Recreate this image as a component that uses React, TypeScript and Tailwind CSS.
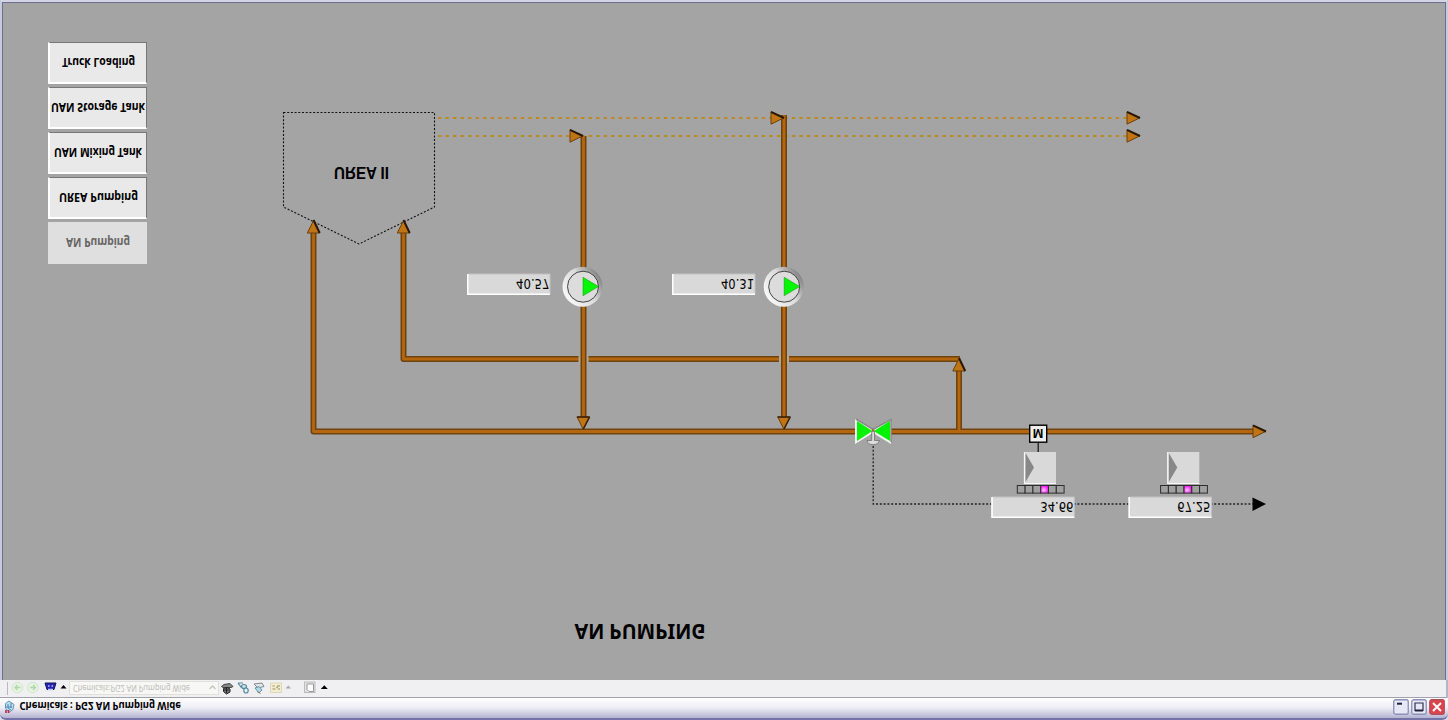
import React from 'react';

const VERDANA = '"Noto Sans", sans-serif';
const ARIAL = '"Liberation Sans", sans-serif';
const TAHOMA = '"DejaVu Sans Condensed", "DejaVu Sans", sans-serif';

const LINKS = [
  { label: 'Truck Loading', width: 73 },
  { label: 'UAN Storage Tank', width: 94 },
  { label: 'UAN Mixing Tank', width: 88 },
  { label: 'UREA Pumping', width: 79 },
  { label: 'AN Pumping', width: 64, current: true },
];

type LabelProps = {
  x: number; y: number; w: number; size: number; children: string;
  font?: string; bold?: boolean; fill?: string;
};

/* Text mirrored about its baseline, fitted to the width w. */
function Label({ x, y, w, size, children, font = VERDANA, bold, fill = '#000' }: LabelProps) {
  return (
    <text transform={`translate(${x} ${y}) scale(1 -1)`} textLength={w} lengthAdjust="spacingAndGlyphs"
      fontSize={size} fontFamily={font} fontWeight={bold ? 700 : 400} fill={fill}>{children}</text>
  );
}

function Pipe({ d }: { d: string }) {
  return (
    <g fill="none" strokeLinejoin="round">
      <path d={d} stroke="#6f430f" strokeWidth="6" />
      <path d={d} stroke="#b4670e" strokeWidth="2.8" />
    </g>
  );
}

function Head({ x, y, angle = 0 }: { x: number; y: number; angle?: number }) {
  const down = angle === 90;
  return (
    <g transform={`translate(${x} ${y}) rotate(${angle})`}>
      <path d="M-13-6.2-.5 0-13 6.2Z" fill="#c07414" stroke="#6b410f" strokeWidth="1" />
      {down
        ? <path d="M-13-6.5V6.5M-13-6.2-1 0" fill="none" stroke="#3a2206" strokeWidth="1.6" />
        : <path d={angle === -90 ? 'M-13 6.2 0 0' : 'M-13-6.2 0 0'} transform={angle === -90 ? 'rotate(0)' : undefined} stroke="#2b1804" strokeWidth="2" />}
    </g>
  );
}

function Pump({ cx }: { cx: number }) {
  return (
    <g>
      <circle cx={cx} cy="286.7" r="20" fill="url(#rim)" />
      <circle cx={cx + 0.5} cy="286.7" r="15.5" fill="#dcdcdc" stroke="#333" strokeWidth="0.9" />
      <path d={`M${cx + 0.5} 277.3 ${cx + 16} 286.5 ${cx + 0.5} 295.7Z`} fill="#04f804" stroke="#178a17" strokeWidth="0.5" />
    </g>
  );
}

function Readout({ x, y, tx, tw, value }: { x: number; y: number; tx: number; tw: number; value: string }) {
  return (
    <g>
      <rect x={x} y={y} width="83" height="21" fill="#d9d9d9" />
      <path d={`M${x + 1} ${y}H${x + 83}V${y + 20}`} fill="none" stroke="#c2c2c2" strokeWidth="1" />
      <path d={`M${x + 0.75} ${y}V${y + 20.25}H${x + 83}`} fill="none" stroke="#fff" strokeWidth="1.5" />
      <Label x={tx} y={y + 5} w={tw} size={13.8} font={TAHOMA}>{value}</Label>
    </g>
  );
}

function Controller({ x }: { x: number }) {
  return (
    <g>
      <rect x={x} y="452" width="32" height="32" fill="#d9d9d9" />
      <path d={`M${x + 0.5} 452V483.5H${x + 32}`} fill="none" stroke="#f8f8f8" strokeWidth="1.2" />
      <path d={`M${x + 1.5} 453 ${x + 10} 467.5 ${x + 1.5} 482Z`} fill="#888" />
      {[0, 1, 2, 3, 4, 5].map((i) => (
        <rect key={i} x={x - 6.7 + i * 7.8} y="485.5" width="7.8" height="7.6"
          fill={i === 3 ? 'url(#lamp)' : '#a0a0a0'} stroke="#2d2d2d" strokeWidth="1" />
      ))}
    </g>
  );
}

function Diagram() {
  return (
    <svg width="1448" height="720" viewBox="0 0 1448 720" className="block">
      <defs>
        <linearGradient id="rim" x1="0.1" y1="0.75" x2="0.9" y2="0.2">
          <stop offset="0" stopColor="#f6f6f6" />
          <stop offset="0.55" stopColor="#dadada" />
          <stop offset="1" stopColor="#858585" />
        </linearGradient>
        <radialGradient id="lamp" cx="0.4" cy="0.6" r="0.6">
          <stop offset="0" stopColor="#ffc4ff" />
          <stop offset="1" stopColor="#f010f0" />
        </radialGradient>
      </defs>

      <path d="M283.5 112.5H434.5V207L359 244 283.5 207Z" fill="none" stroke="#111" strokeWidth="1.1" strokeDasharray="2 1.7" />
      <Label x={334} y={167} w={55} size={16.2} font={ARIAL} bold>UREA II</Label>

      <path d="M438 118H1127M438 136H1127" stroke="#bd8a22" strokeWidth="1.9" strokeDasharray="3.3 4.23" />

      <Pipe d="M403.5 228V359H960" />
      <path d="M583.5 354.500V363.500M784 354.500V363.500" stroke="#aaa99a" strokeWidth="10" />
      <Pipe d="M313.5 228V431.5H1254" />
      <Pipe d="M583.5 136V418" />
      <Pipe d="M784 115V418" />
      <Pipe d="M959 430V370" />

      <Head x={313.5} y={220} angle={-90} />
      <Head x={403.5} y={220} angle={-90} />
      <Head x={959} y={358} angle={-90} />
      <Head x={583.3} y={430} angle={90} />
      <Head x={784} y={430} angle={90} />
      <Head x={583} y={136} />
      <Head x={784} y={118} />
      <Head x={1140} y={118} />
      <Head x={1140} y={136} />
      <Head x={1266} y={431.5} />

      <Pump cx={582.5} />
      <Pump cx={783.7} />
      <Readout x={467} y={274} tx={516} tw={33.5} value="40.57" />
      <Readout x={672} y={274} tx={721} tw={33} value="40.31" />

      <path d="M873.2 446V504H1253" fill="none" stroke="#222" strokeWidth="1.3" strokeDasharray="2 1.8" />
      <path d="M1252.5 497.5 1266 504 1252.5 511Z" fill="#000" />
      <path d="M855 419 873 430 891 419V444L873 433 855 444Z" fill="#f2f2f2" />
      <path d="M856 419 873 429.5 891 419.5V442" fill="none" stroke="#8a8a8a" strokeWidth="1.5" />
      <path d="M857 421V441L872.300 431ZM890 421V441L873.700 431Z" fill="#04f204" />
      <path d="M871.7 431V440.5H867Q868 444.7 873 444.7T879.5 440.5H874.5V431Z" fill="#dcdcdc" stroke="#666" strokeWidth="0.7" />
      <path d="M871.5 429.5h3l-1.5 3z" fill="#9b6b35" />

      <path d="M1038.2 443V452" stroke="#111" strokeWidth="1.2" />
      <rect x="1029.7" y="425.2" width="17" height="17" fill="#eee" stroke="#000" strokeWidth="1.4" />
      <Label x={1032.8} y={429.3} w={10.6} size={13} font={ARIAL} bold>M</Label>
      <Controller x={1024} />
      <Controller x={1167.3} />
      <Readout x={991.3} y={497} tx={1040.3} tw={33} value="34.66" />
      <Readout x={1128.5} y={497} tx={1177.3} tw={33} value="67.25" />

      <Label x={574.5} y={624.3} w={131} size={21} bold>AN PUMPING</Label>
    </svg>
  );
}

function Links() {
  return (
    <nav className="flex w-[99px] flex-col gap-[3px]">
      {LINKS.map(({ label, width, current }) => (
        <button key={label} className={current
          ? 'flex h-[42px] items-center justify-center bg-[#dfdfdf]'
          : 'flex h-[42px] items-center justify-center border-t border-r border-b-2 border-l-2 border-t-[#777] border-r-[#777] border-b-white border-l-white bg-[#e9e9e9]'}>
          <svg width={width} height="16" className="overflow-visible">
            <Label x={0} y={3} w={width} size={12} bold fill={current ? '#666' : '#000'}>{label}</Label>
          </svg>
        </button>
      ))}
    </nav>
  );
}

function Toolbar() {
  return (
    <div className="h-[18px] shrink-0 border-b border-[#a2a2ae] bg-[#f0f0f3]">
      <svg width="340" height="17" viewBox="0 680 340 17" className="block">
        <path d="M7.5 682V695" stroke="#b8b8bd" />
        <g fill="#e5f3e1" stroke="#d0e5ca">
          <circle cx="17.5" cy="687.5" r="5.3" /><circle cx="32.8" cy="687.5" r="5.3" />
        </g>
        <path d="M20.5 687.5H15m2.5-2.5-2.5 2.5 2.5 2.5M30 687.5h5.500m-2.500-2.500 2.500 2.500-2.500 2.500" fill="none" stroke="#b3d6ad" strokeWidth="1.3" />
        <path d="M45 683H56L54 689.5H47Z" fill="#2525b4" stroke="#17174e" />
        <path d="M48 689.500h5M48 686h1.500M51.500 686h1.500" stroke="#c0c4ff" strokeWidth="1.300" />
        <path d="M60.500 688.500 63.500 685 66.500 688.500ZM320.800 689 324.300 685.300 327.800 689Z" fill="#000" />
        <rect x="69.500" y="681.500" width="149" height="13" fill="#f7f7f5" stroke="#e1e1da" />
        <Label x={73} y={684.5} w={117} size={9.5} fill="#bdbdb5">Chemicals:PG2 AN Pumping Wide</Label>
        <path d="M209.500 689 212.500 686 215.500 689" fill="none" stroke="#c4c4bb" strokeWidth="1.300" />
        <g strokeWidth="1">
          <path d="M221.500 686.500 224 684.500 230 683.500 233 686.500 231 687.500H223Z" fill="#888" stroke="#444" />
          <path d="M223.500 691.500V688.500L227 687.500 230 689V692L226.500 694Z" fill="#777" stroke="#222" />
          <path d="M224 690h5M226.500 688v5" stroke="#222" />
        </g>
        <g fill="none" stroke="#56879a" strokeWidth="1.200">
          <path d="M238 683 241 687 244 686M238 683l5 0" />
          <ellipse cx="244" cy="686.500" rx="2.500" ry="2" fill="#c6e3ec" />
          <ellipse cx="246" cy="690.500" rx="2.200" ry="2.500" fill="#e2f1f4" />
        </g>
        <path d="M254 684 262 683 264 686.500 258 688Z" fill="#e1e6e8" stroke="#84898d" />
        <path d="M255 688 259 693 262 690 259 686.500Z" fill="#aedbec" stroke="#6c93a2" />
        <path d="M257 691.500 260.500 693.500" stroke="#8b7d62" />
        <rect x="270.500" y="683" width="11" height="9.500" fill="#f2edcf" stroke="#ddd7bd" />
        <path d="M272.500 689h3m2.500 0h2M272.500 686h2m2.500 0h3M276 687.500h2" stroke="#b8ad85" strokeWidth="1.300" />
        <path d="M285.500 688.500 288.300 685.500 291 688.500Z" fill="#aaa" />
        <rect x="304.500" y="682" width="10.500" height="10.500" fill="#e3e3e5" stroke="#bbb" />
        <path d="M307 684h6.500v7.500H309L307 689.500Z" fill="#fff" stroke="#999" />
      </svg>
    </div>
  );
}

function TitleBar() {
  return (
    <div className="flex h-[22px] shrink-0 items-start justify-between rounded-b-md border-b-2 border-[#7474a8] bg-linear-to-b from-white via-[#ededf5] to-[#b3b3d0] pr-[3px]">
      <svg width="200" height="20" viewBox="0 698 200 20" className="overflow-visible">
        <path d="M5.500 703.500 9 701 14 704.500 13 709.500 9.500 712 5.500 708.500Z" fill="#bcdff0" stroke="#6596b8" />
        <path d="M8 704v4l3 2M11 703v5M6 707h6" fill="none" stroke="#5387b0" />
        <path d="M6 710v3M8.500 710v3" stroke="#b8293c" strokeWidth="1.600" />
        <Label x={19.500} y={702} w={161.500} size={11} bold>Chemicals : PG2 AN Pumping Wide</Label>
      </svg>
      <div className="flex gap-[2px] pt-px">
        <svg width="16" height="16" viewBox="0 0 16 16">
          <rect x=".75" y=".75" width="14.500" height="14.500" rx="2" fill="#e7e8f5" stroke="#8c90b8" strokeWidth="1.300" />
          <path d="M4 4.700h5" stroke="#202040" strokeWidth="2" />
        </svg>
        <svg width="16" height="16" viewBox="0 0 16 16">
          <rect x=".75" y=".75" width="14.500" height="14.500" rx="2" fill="#e7e8f5" stroke="#8c90b8" strokeWidth="1.300" />
          <path d="M4 4h8v7.500H4Z" fill="none" stroke="#303050" strokeWidth="1.200" />
          <path d="M4 11.500h8" stroke="#202040" strokeWidth="2" />
        </svg>
        <svg width="16" height="16" viewBox="0 0 16 16">
          <rect x=".75" y=".75" width="14.500" height="14.500" rx="2" fill="#dc444c" stroke="#b94a5a" strokeWidth="1.300" />
          <path d="m4 4 8 8m0-8-8 8" stroke="#fff" strokeWidth="1.900" />
        </svg>
      </div>
    </div>
  );
}

export default function App() {
  return (
    <div className="flex h-[720px] w-[1448px] flex-col overflow-hidden bg-[#dcdce8]">
      <div className="flex h-[680px] shrink-0 flex-col border-x-2 border-t-2 border-x-[#c9c9dc] border-t-[#d4d4e4]">
        <main className="relative flex-1 overflow-hidden border-t border-r border-l border-[#6e6e8e] bg-[#a4a4a4] pt-[39px] pl-[45px]">
          <div className="absolute -top-[3px] -left-[3px]"><Diagram /></div>
          <Links />
        </main>
      </div>
      <div className="border-x-2 border-[#b4b4ca]"><div className="-ml-[2px]"><Toolbar /></div></div>
      <TitleBar />
    </div>
  );
}
